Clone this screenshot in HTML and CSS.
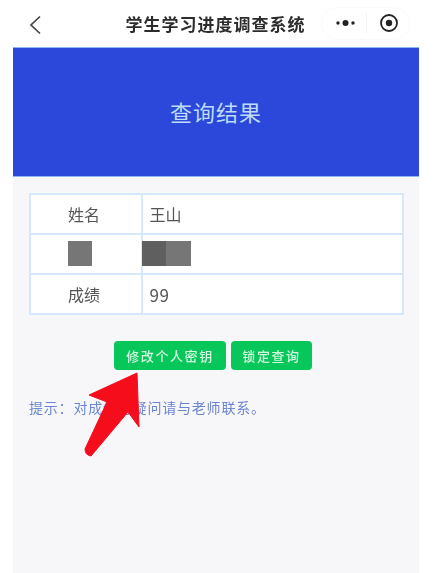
FILE: index.html
```html
<!DOCTYPE html>
<html lang="zh-CN">
<head>
    <meta charset="UTF-8">
    <meta name="viewport" content="width=device-width, initial-scale=1.0">
    <title>学生学习进度调查系统</title>
    <link rel="stylesheet" href="styles.css">
</head>
<body>
    <!-- Top nav -->
    <header class="nav">
        <svg class="nav-back" width="14" height="20" viewBox="0 0 14 20">
            <path d="M12 1.5 L3 10 L12 18.5" fill="none" stroke="#444" stroke-width="1.7"/>
        </svg>
        <h1 class="nav-title">学生学习进度调查系统</h1>
        <div class="capsule">
            <svg width="22" height="8" viewBox="0 0 22 8">
                <circle cx="3" cy="4" r="1.7" fill="#222"/>
                <circle cx="10.5" cy="4" r="3" fill="#222"/>
                <circle cx="18" cy="4" r="1.7" fill="#222"/>
            </svg>
            <span class="capsule-line"></span>
            <svg width="20" height="20" viewBox="0 0 20 20">
                <circle cx="10" cy="10" r="8" fill="none" stroke="#222" stroke-width="1.8"/>
                <circle cx="10" cy="10" r="3.2" fill="#222"/>
            </svg>
        </div>
    </header>

    <main class="page">
        <div class="banner">查询结果</div>

        <table class="result-table">
            <tr>
                <th>姓名</th>
                <td>王山</td>
            </tr>
            <tr>
                <th class="mask-head"><span class="mask mask-a"></span></th>
                <td class="mask-cell"><span class="mask mask-b"></span><span class="mask mask-a"></span></td>
            </tr>
            <tr>
                <th>成绩</th>
                <td class="score">99</td>
            </tr>
        </table>

        <div class="actions">
            <button class="green-btn wide">修改个人密钥</button>
            <button class="green-btn">锁定查询</button>
        </div>

        <p class="hint">提示：对成绩有疑问请与老师联系。</p>
    </main>

    <!-- Red arrow drawn over the page -->
    <svg class="arrow" width="433" height="573" viewBox="0 0 433 573">
        <path d="M137 373 L89 395 L107 402 L85 449 Q85 455 91 456 L128 412 L139 427 Z" fill="#f50d1c" stroke="#f50d1c" stroke-width="1" stroke-linejoin="round"/>
    </svg>
</body>
</html>
```

FILE: styles.css
```css
/* General Styles */
* {
    margin: 0;
    padding: 0;
    box-sizing: border-box;
}

body {
    font-family: "Noto Sans CJK SC", "Liberation Sans", sans-serif;
    background-color: #fff;
    height: 573px;
    overflow: hidden;
    position: relative;
}

/* Nav Styles */
.nav {
    height: 47px;
    position: relative;
    display: flex;
    align-items: center;
    justify-content: flex-end;
    padding-right: 23px;
}

.nav-back {
    position: absolute;
    left: 28px;
    top: 15px;
}

.nav-title {
    position: absolute;
    left: 0;
    right: 2px;
    top: 12px;
    text-align: center;
    font-size: 17px;
    line-height: 24px;
    letter-spacing: 1px;
    font-weight: 700;
    color: #2c2c2c;
    filter: blur(0.4px);
}

.capsule {
    width: 89px;
    height: 33px;
    margin-top: -1px;
    border: 1px solid #f9f9f9;
    border-radius: 17px;
    display: flex;
    align-items: center;
    padding-left: 13px;
    filter: blur(0.4px);
}

.capsule-line {
    width: 1px;
    height: 20px;
    background-color: #f0f0f0;
    margin: 0 12px 0 9px;
}

/* Page Styles */
.page {
    margin: 0 14px 0 13px;
    height: 526px;
    background-color: #f7f7f9;
}

.banner {
    height: 130px;
    padding-bottom: 3px;
    background-color: #2c48da;
    border-top: 1px solid #8fb4f2;
    border-bottom: 1px solid #8fb4f2;
    color: #bcdcf8;
    font-size: 22px;
    letter-spacing: 1px;
    display: flex;
    align-items: center;
    justify-content: center;
}

/* Table Styles */
.result-table {
    width: 375px;
    height: 121px;
    margin: 16px 0 0 15.5px;
    border-collapse: collapse;
    table-layout: fixed;
    background-color: #fff;
    color: #555;
    font-size: 16px;
    filter: blur(0.3px);
}

.result-table th, .result-table td {
    height: 40px;
    border: 2px solid #d6e8fb;
    font-weight: 400;
}

.result-table th {
    width: 112px;
    padding-right: 3px;
    text-align: center;
}

.result-table td {
    text-align: left;
    padding-left: 7px;
}

.result-table .mask-head {
    padding: 0 0 0 37px;
    text-align: left;
}

.result-table .mask-cell {
    padding-left: 0;
}

.result-table .score {
    font-size: 17px;
    letter-spacing: 0.5px;
}

.mask {
    display: inline-block;
    width: 24.5px;
    height: 25px;
    margin-bottom: 2px;
    vertical-align: middle;
}

.mask-a {
    background-color: #767676;
}

.mask-b {
    margin-left: -1px;
    background-color: #5f5f5f;
}

/* Button Styles */
.actions {
    display: flex;
    gap: 5px;
    margin: 26px 0 0 101px;
}

.green-btn {
    width: 81px;
    height: 29px;
    background-color: #07c65a;
    color: #d2f8df;
    border: none;
    border-radius: 4px;
    font-family: inherit;
    font-size: 13px;
    font-weight: 500;
    letter-spacing: 1.6px;
    filter: blur(0.3px);
}

.green-btn.wide {
    width: 112px;
}

.hint {
    margin: 28px 0 0 16px;
    color: #6b85d2;
    font-size: 14px;
    line-height: 18px;
    letter-spacing: 0.8px;
    filter: blur(0.3px);
}

.arrow {
    position: absolute;
    left: 0;
    top: 0;
    pointer-events: none;
}
```
